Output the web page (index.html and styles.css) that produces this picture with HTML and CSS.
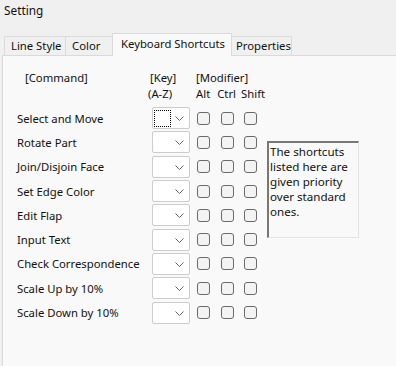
FILE: index.html
```html
<!DOCTYPE html>
<html lang="en">
<head>
    <meta charset="UTF-8">
    <title>Setting</title>
    <link rel="stylesheet" href="styles.css">
</head>
<body>

<div class="window">
    <div class="titlebar">Setting</div>

    <div class="tabs">
        <div class="tab tab-line">Line Style</div>
        <div class="tab tab-color">Color</div>
        <div class="tab tab-keys active">Keyboard Shortcuts</div>
        <div class="tab tab-props">Properties</div>
    </div>

    <div class="panel">
        <div class="shortcuts">
            <div class="head cmd">[Command]</div>
            <div class="head key">[Key]</div>
            <div class="head mod">[Modifier]</div>

            <div class="head az">(A-Z)</div>
            <div class="head mods"><span class="m-alt">Alt</span><span class="m-ctrl">Ctrl</span><span>Shift</span></div>

            <div class="label">Select and Move</div>
            <div class="combo"><span class="focus"></span><svg class="chev" width="9" height="5" viewBox="0 0 9 5"><path d="M0.5 0.5 L4.5 4.5 L8.5 0.5" fill="none" stroke="#666" stroke-width="1"/></svg></div>
            <div class="cb"></div><div class="cb"></div><div class="cb"></div>

            <div class="note">The shortcuts listed here are given priority over standard ones.</div>

            <div class="label">Rotate Part</div>
            <div class="combo"><svg class="chev" width="9" height="5" viewBox="0 0 9 5"><path d="M0.5 0.5 L4.5 4.5 L8.5 0.5" fill="none" stroke="#666" stroke-width="1"/></svg></div>
            <div class="cb"></div><div class="cb"></div><div class="cb"></div>

            <div class="label">Join/Disjoin Face</div>
            <div class="combo"><svg class="chev" width="9" height="5" viewBox="0 0 9 5"><path d="M0.5 0.5 L4.5 4.5 L8.5 0.5" fill="none" stroke="#666" stroke-width="1"/></svg></div>
            <div class="cb"></div><div class="cb"></div><div class="cb"></div>

            <div class="label">Set Edge Color</div>
            <div class="combo"><svg class="chev" width="9" height="5" viewBox="0 0 9 5"><path d="M0.5 0.5 L4.5 4.5 L8.5 0.5" fill="none" stroke="#666" stroke-width="1"/></svg></div>
            <div class="cb"></div><div class="cb"></div><div class="cb"></div>

            <div class="label">Edit Flap</div>
            <div class="combo"><svg class="chev" width="9" height="5" viewBox="0 0 9 5"><path d="M0.5 0.5 L4.5 4.5 L8.5 0.5" fill="none" stroke="#666" stroke-width="1"/></svg></div>
            <div class="cb"></div><div class="cb"></div><div class="cb"></div>

            <div class="label">Input Text</div>
            <div class="combo"><svg class="chev" width="9" height="5" viewBox="0 0 9 5"><path d="M0.5 0.5 L4.5 4.5 L8.5 0.5" fill="none" stroke="#666" stroke-width="1"/></svg></div>
            <div class="cb"></div><div class="cb"></div><div class="cb"></div>

            <div class="label">Check Correspondence</div>
            <div class="combo"><svg class="chev" width="9" height="5" viewBox="0 0 9 5"><path d="M0.5 0.5 L4.5 4.5 L8.5 0.5" fill="none" stroke="#666" stroke-width="1"/></svg></div>
            <div class="cb"></div><div class="cb"></div><div class="cb"></div>

            <div class="label">Scale Up by 10%</div>
            <div class="combo"><svg class="chev" width="9" height="5" viewBox="0 0 9 5"><path d="M0.5 0.5 L4.5 4.5 L8.5 0.5" fill="none" stroke="#666" stroke-width="1"/></svg></div>
            <div class="cb"></div><div class="cb"></div><div class="cb"></div>

            <div class="label">Scale Down by 10%</div>
            <div class="combo"><svg class="chev" width="9" height="5" viewBox="0 0 9 5"><path d="M0.5 0.5 L4.5 4.5 L8.5 0.5" fill="none" stroke="#666" stroke-width="1"/></svg></div>
            <div class="cb"></div><div class="cb"></div><div class="cb"></div>
        </div>
    </div>
</div>

</body>
</html>
```

FILE: styles.css
```css
html, body {
    margin: 0;
    padding: 0;
}

body {
    background: #f0f0f0;
    font-family: "Noto Sans", sans-serif;
    font-size: 11.3px;
    color: #111;
    overflow: hidden;
}

.window {
    width: 396px;
    height: 366px;
    display: flex;
    flex-direction: column;
}

.titlebar {
    height: 33px;
    padding-left: 4px;
    line-height: 20px;
    font-size: 11.8px;
}

.tabs {
    display: flex;
    align-items: flex-end;
    padding-left: 4px;
    height: 22px;
    position: relative;
    z-index: 1;
}

.tab {
    box-sizing: border-box;
    height: 19px;
    line-height: 18px;
    padding-left: 6px;
    border: 1px solid #dadada;
    border-bottom: none;
    background: #f0f0f0;
    margin-right: -1px;
    white-space: nowrap;
}

.tab-line {
    width: 62px;
}

.tab-color {
    width: 48px;
}

.tab-keys {
    width: 120px;
}

.tab-props {
    width: 61px;
    padding-left: 4px;
}

.tab.active {
    height: 23px;
    line-height: 20px;
    padding-left: 8px;
    background: #f9f9f9;
    margin-bottom: -1px;
}

.panel {
    flex: 1;
    margin-left: 2px;
    background: #f9f9f9;
    border-top: 1px solid #dadada;
    border-left: 1px solid #dadada;
    padding: 14px 0 0 14px;
}

.shortcuts {
    display: grid;
    grid-template-columns: 135px 45px 24px 23px 23px 92px;
    grid-template-rows: 16px 20px;
    grid-auto-rows: 24.3px;
    align-items: center;
}

.head {
    line-height: 16px;
    height: 16px;
    white-space: nowrap;
}

.cmd {
    grid-column: 1;
    padding-left: 8px;
}

.key {
    grid-column: 2;
    margin-left: -2px;
}

.mod {
    grid-column: 3 / span 3;
    margin-left: -1px;
}

.az {
    grid-column: 2;
    margin-left: -4px;
    align-self: start;
}

.mods {
    grid-column: 3 / span 3;
    margin-left: -1px;
    align-self: start;
}

.m-alt {
    margin-right: 7px;
}

.m-ctrl {
    margin-right: 5px;
}

.label {
    grid-column: 1;
    white-space: nowrap;
}

.combo {
    grid-column: 2;
    width: 36px;
    height: 20px;
    border: 1px solid #cccccc;
    border-radius: 2px;
    background: #ffffff;
    position: relative;
}

.chev {
    position: absolute;
    right: 5px;
    top: 8px;
}

.focus {
    position: absolute;
    left: 1px;
    top: 2px;
    width: 15px;
    height: 15px;
    border: 1px dotted #000;
}

.cb {
    width: 11px;
    height: 11px;
    border: 1px solid #6a6a6a;
    border-radius: 3px;
    background: #f3f3f3;
}

.note {
    grid-column: 6;
    grid-row: 4 / span 4;
    align-self: start;
    margin-top: 11px;
    height: 93px;
    width: 88px;
    border-top: 2px solid #777;
    border-left: 2px solid #777;
    border-right: 1px solid #e3e3e3;
    border-bottom: 1px solid #e3e3e3;
    padding: 1px 0 0 1px;
    line-height: 15px;
    font-size: 11.6px;
}
```
